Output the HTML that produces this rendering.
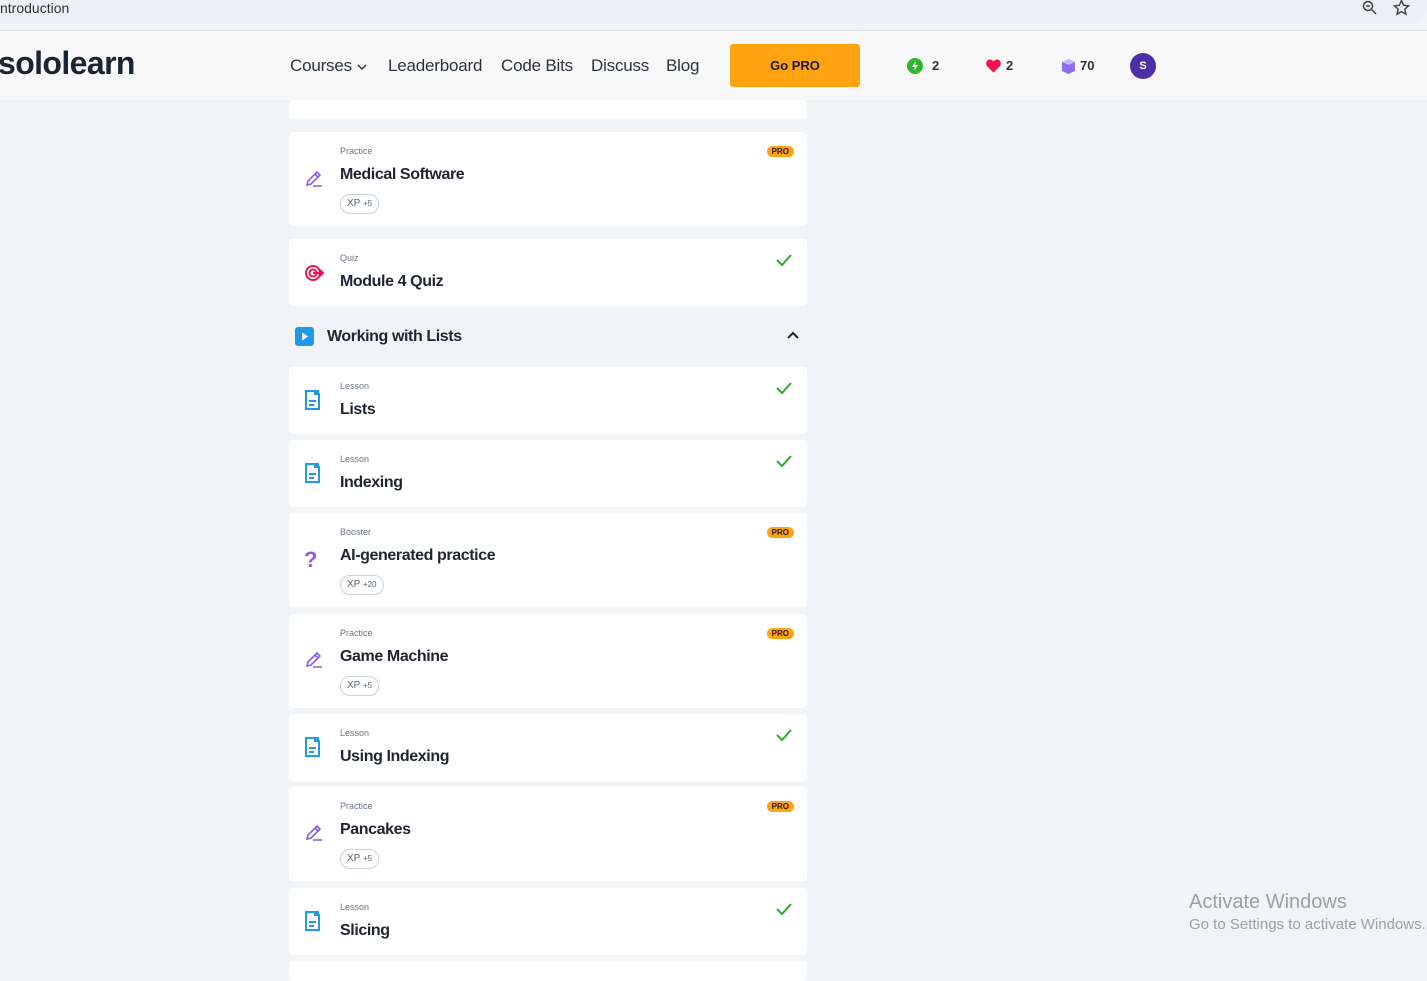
<!DOCTYPE html>
<html><head><meta charset="utf-8"><style>
*{margin:0;padding:0;box-sizing:border-box}
body{width:1427px;height:973px;overflow:hidden;background:#f1f4f7;font-family:"Liberation Sans",sans-serif;position:relative;color:#1f2430}
.bar{position:absolute;left:0;top:0;width:1427px;height:24px;background:#eceff7;border-radius:0 0 14px 0}
.bar span{position:absolute;left:0;top:0;font-size:14px;color:#333}
.hdr{position:absolute;left:0;top:30px;width:1427px;height:70px;background:#f8f8f8;border-top:1px solid #e0e0e0}
.logo{position:absolute;left:-2px;top:14px;font-size:32px;font-weight:bold;color:#1b2431;letter-spacing:-0.6px}
.nav{position:absolute;top:25px;font-size:17px;color:#2b3340;letter-spacing:-0.2px}
.gopro{position:absolute;left:730px;top:13px;width:130px;height:43px;background:#ffa310;border-radius:3px;font-size:13px;font-weight:bold;text-align:center;line-height:43px;color:#1b1b1b}
.stat{position:absolute;top:27px;font-size:13px;font-weight:bold;color:#2b3340}
.card{position:absolute;left:289px;width:518px;background:#fff;border-radius:4px}
.lbl{position:absolute;left:51px;top:14px;font-size:9px;color:#6b7585}
.ttl{position:absolute;left:51px;top:34px;font-size:16px;font-weight:bold;color:#1f2430;letter-spacing:-0.4px}
.xp{position:absolute;left:51px;top:62px;height:20px;border:1px solid #c9d1dc;border-radius:10px;font-size:10px;padding:0 6px;line-height:18px;color:#5a6475}
.xp small{font-size:8px}
.pro{position:absolute;right:13px;top:14px;background:#ffa310;border-radius:7px;font-size:8px;font-weight:bold;padding:1px 5px;color:#222}
.chk{position:absolute;right:14px;top:14px}
.ic{position:absolute;left:15px}
</style></head><body>
<div class="bar"><span>ntroduction</span>
<svg style="position:absolute;left:1362px;top:0" width="16" height="16" viewBox="0 0 16 16"><circle cx="6" cy="6" r="4.5" fill="none" stroke="#444" stroke-width="1.5"/><path d="M9.5 9.5L14 14M4 6h4" stroke="#444" stroke-width="1.5"/></svg>
<svg style="position:absolute;left:1393px;top:-1px" width="17" height="17" viewBox="0 0 24 24"><path d="M12 2l3 7 7 .6-5.3 4.7 1.6 7.2L12 17.8 5.7 21.5l1.6-7.2L2 9.6 9 9z" fill="none" stroke="#444" stroke-width="2"/></svg>
</div>
<div class="hdr">
<div class="logo">sololearn</div>
<div class="nav" style="left:290px">Courses <svg width="12" height="8" viewBox="0 0 12 8"><path d="M2 2l4 4 4-4" fill="none" stroke="#2b3340" stroke-width="1.5"/></svg></div>
<div class="nav" style="left:388px">Leaderboard</div>
<div class="nav" style="left:501px">Code Bits</div>
<div class="nav" style="left:591px">Discuss</div>
<div class="nav" style="left:666px">Blog</div>
<div class="gopro">Go PRO</div>
<svg style="position:absolute;left:907px;top:27px" width="16" height="16" viewBox="0 0 16 16"><circle cx="8" cy="8" r="8" fill="#2eb82e"/><path d="M9 3L5 9h3l-1 4 4-6H8z" fill="#fff"/></svg>
<div class="stat" style="left:932px">2</div>
<svg style="position:absolute;left:986px;top:28px" width="15" height="14" viewBox="0 0 16 14"><path d="M8 14L1 7C-1 4 1 0 4 0c2 0 3 1 4 2 1-1 2-2 4-2 3 0 5 4 3 7z" fill="#f0134d"/></svg>
<div class="stat" style="left:1006px">2</div>
<svg style="position:absolute;left:1062px;top:28px" width="13" height="15" viewBox="0 0 13 15"><path d="M6.5 0L13 3v9l-6.5 3L0 12V3z" fill="#8f6ded"/><path d="M6.5 0L13 3 6.5 6 0 3z" fill="#c8b6ff"/></svg>
<div class="stat" style="left:1080px">70</div>
<div style="position:absolute;left:1130px;top:22px;width:26px;height:26px;border-radius:50%;background:#4e2ea8;color:#fff;font-size:11px;font-weight:bold;text-align:center;line-height:26px">S</div>
</div>

<div class="card" style="top:100px;height:19px"></div>

<div class="card" style="top:132px;height:94px"><div class="lbl">Practice</div><div class="ttl">Medical Software</div><div class="xp">XP <small>+5</small></div><div class="pro">PRO</div>
<svg class="ic" style="top:37px" width="20" height="20" viewBox="0 0 20 20"><path d="M3 16l1-4 9-9 3 3-9 9zM11 5l3 3M9 17h9" fill="none" stroke="#8c5ae6" stroke-width="1.6"/></svg></div>

<div class="card" style="top:239px;height:67px"><div class="lbl">Quiz</div><div class="ttl">Module 4 Quiz</div>
<svg class="chk" width="18" height="14" viewBox="0 0 18 14"><path d="M2 7l5 5 9-10" fill="none" stroke="#2eab2e" stroke-width="2"/></svg>
<svg class="ic" style="top:24px" width="20" height="20" viewBox="0 0 20 20"><circle cx="9" cy="10" r="7" fill="none" stroke="#f0134d" stroke-width="2"/><circle cx="9" cy="10" r="3.5" fill="none" stroke="#f0134d" stroke-width="2"/><path d="M9 10h10M16 7l3 3-3 3" fill="none" stroke="#f0134d" stroke-width="2"/></svg></div>

<svg style="position:absolute;left:295px;top:327px" width="19" height="19" viewBox="0 0 19 19"><rect width="19" height="19" rx="3" fill="#1f9ae8"/><path d="M7 5.5v8l6-4z" fill="#fff"/></svg>
<div style="position:absolute;left:327px;top:328px;font-size:16px;font-weight:bold;letter-spacing:-0.4px">Working with Lists</div>
<svg style="position:absolute;left:786px;top:330px" width="14" height="10" viewBox="0 0 14 10"><path d="M2 8l5-5 5 5" fill="none" stroke="#1f2430" stroke-width="2"/></svg>

<div class="card" style="top:367px;height:67px"><div class="lbl">Lesson</div><div class="ttl">Lists</div>
<svg class="chk" width="18" height="14" viewBox="0 0 18 14"><path d="M2 7l5 5 9-10" fill="none" stroke="#2eab2e" stroke-width="2"/></svg>
<svg class="ic" style="top:22px" width="18" height="22" viewBox="0 0 18 22"><path d="M2 2h9v3h4v15H2z" fill="none" stroke="#1f9ae8" stroke-width="2"/><rect x="11" y="1" width="4" height="5" fill="#1f9ae8"/><path d="M5 12h7M5 16h5" stroke="#1f9ae8" stroke-width="2"/></svg></div>

<div class="card" style="top:440px;height:67px"><div class="lbl">Lesson</div><div class="ttl">Indexing</div>
<svg class="chk" width="18" height="14" viewBox="0 0 18 14"><path d="M2 7l5 5 9-10" fill="none" stroke="#2eab2e" stroke-width="2"/></svg>
<svg class="ic" style="top:22px" width="18" height="22" viewBox="0 0 18 22"><path d="M2 2h9v3h4v15H2z" fill="none" stroke="#1f9ae8" stroke-width="2"/><rect x="11" y="1" width="4" height="5" fill="#1f9ae8"/><path d="M5 12h7M5 16h5" stroke="#1f9ae8" stroke-width="2"/></svg></div>

<div class="card" style="top:513px;height:94px"><div class="lbl">Booster</div><div class="ttl">AI-generated practice</div><div class="xp">XP <small>+20</small></div><div class="pro">PRO</div>
<div class="ic" style="top:34px;font-size:22px;font-weight:bold;color:#8c5ae6">?</div></div>

<div class="card" style="top:614px;height:94px"><div class="lbl">Practice</div><div class="ttl">Game Machine</div><div class="xp">XP <small>+5</small></div><div class="pro">PRO</div>
<svg class="ic" style="top:36px" width="20" height="20" viewBox="0 0 20 20"><path d="M3 16l1-4 9-9 3 3-9 9zM11 5l3 3M9 17h9" fill="none" stroke="#8c5ae6" stroke-width="1.6"/></svg></div>

<div class="card" style="top:714px;height:67px"><div class="lbl">Lesson</div><div class="ttl">Using Indexing</div>
<svg class="chk" width="18" height="14" viewBox="0 0 18 14"><path d="M2 7l5 5 9-10" fill="none" stroke="#2eab2e" stroke-width="2"/></svg>
<svg class="ic" style="top:22px" width="18" height="22" viewBox="0 0 18 22"><path d="M2 2h9v3h4v15H2z" fill="none" stroke="#1f9ae8" stroke-width="2"/><rect x="11" y="1" width="4" height="5" fill="#1f9ae8"/><path d="M5 12h7M5 16h5" stroke="#1f9ae8" stroke-width="2"/></svg></div>

<div class="card" style="top:787px;height:94px"><div class="lbl">Practice</div><div class="ttl">Pancakes</div><div class="xp">XP <small>+5</small></div><div class="pro">PRO</div>
<svg class="ic" style="top:36px" width="20" height="20" viewBox="0 0 20 20"><path d="M3 16l1-4 9-9 3 3-9 9zM11 5l3 3M9 17h9" fill="none" stroke="#8c5ae6" stroke-width="1.6"/></svg></div>

<div class="card" style="top:888px;height:67px"><div class="lbl">Lesson</div><div class="ttl">Slicing</div>
<svg class="chk" width="18" height="14" viewBox="0 0 18 14"><path d="M2 7l5 5 9-10" fill="none" stroke="#2eab2e" stroke-width="2"/></svg>
<svg class="ic" style="top:22px" width="18" height="22" viewBox="0 0 18 22"><path d="M2 2h9v3h4v15H2z" fill="none" stroke="#1f9ae8" stroke-width="2"/><rect x="11" y="1" width="4" height="5" fill="#1f9ae8"/><path d="M5 12h7M5 16h5" stroke="#1f9ae8" stroke-width="2"/></svg></div>

<div class="card" style="top:961px;height:20px"></div>

<div style="position:absolute;left:1189px;top:891px;font-size:20px;color:#9aa0a6">Activate Windows</div>
<div style="position:absolute;left:1189px;top:916px;font-size:15px;color:#9aa0a6">Go to Settings to activate Windows.</div>
</body></html>
